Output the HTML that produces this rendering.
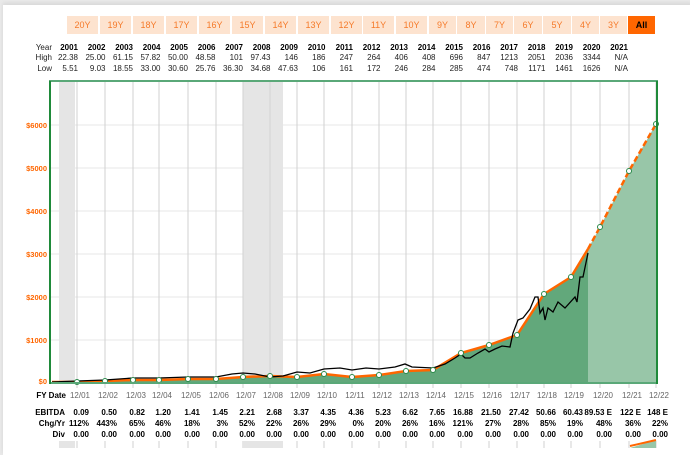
<!DOCTYPE html>
<html><head><meta charset="utf-8"><style>
body{margin:0;width:690px;height:448px;overflow:hidden;background:#e9e9e9;font-family:"Liberation Sans",Arial,sans-serif;}
#card{position:absolute;left:3px;top:5px;width:690px;height:450px;background:#fff;box-shadow:0 -2px 4px rgba(0,0,0,.08);}
.b{position:absolute;top:16px;height:18px;background:#fde3cf;color:#f57a2a;font-size:9px;line-height:18px;text-align:center;}
.t{position:absolute;font-size:8px;line-height:9px;color:#222;text-align:right;width:30px;}
.bd{font-weight:bold;color:#000;}
.c{position:absolute;font-size:8px;line-height:9px;color:#666;text-align:center;width:30px;}
</style></head><body>
<div id="card"></div>
<div class="b" style="left:67px;width:31px">20Y</div>
<div class="b" style="left:100px;width:31px">19Y</div>
<div class="b" style="left:133px;width:31px">18Y</div>
<div class="b" style="left:166px;width:31px">17Y</div>
<div class="b" style="left:199px;width:31px">16Y</div>
<div class="b" style="left:232px;width:31px">15Y</div>
<div class="b" style="left:265px;width:31px">14Y</div>
<div class="b" style="left:298px;width:31px">13Y</div>
<div class="b" style="left:331px;width:31px">12Y</div>
<div class="b" style="left:363px;width:31px">11Y</div>
<div class="b" style="left:396px;width:31px">10Y</div>
<div class="b" style="left:429px;width:27px">9Y</div>
<div class="b" style="left:457px;width:28px">8Y</div>
<div class="b" style="left:486px;width:27px">7Y</div>
<div class="b" style="left:514px;width:28px">6Y</div>
<div class="b" style="left:543px;width:28px">5Y</div>
<div class="b" style="left:572px;width:27px">4Y</div>
<div class="b" style="left:600px;width:27px">3Y</div>
<div class="b" style="left:628px;width:27px;background:#ff6600;color:#000;font-weight:bold">All</div>
<div id="tbl"></div>
<svg style="position:absolute;left:0;top:0" width="690" height="448">
<g stroke="#ececec" stroke-width="1.2">
<line x1="50" x2="657" y1="125" y2="125"/><line x1="50" x2="657" y1="168" y2="168"/><line x1="50" x2="657" y1="211" y2="211"/><line x1="50" x2="657" y1="254" y2="254"/><line x1="50" x2="657" y1="297" y2="297"/><line x1="50" x2="657" y1="340" y2="340"/>
</g>
<rect x="59" y="82" width="16" height="301" fill="#e5e5e5"/>
<rect x="243" y="82" width="40" height="301" fill="#e5e5e5"/>
<g stroke="#d2d2d2" stroke-width="1" id="vg"></g>
<polygon fill="#98c6a8" points="588,249 600,227 629,171 656,124 656,383 588,383"/>
<polygon fill="#62a87b" points="50,383 52,382 77,382 105,381 133,380 159,380 188,379 216,379 243,377 270,376 297,377 324,374 352,377 379,375 406,371 433,370 461,353 489,345 517,335 544,294 571,277 588,249 588,383"/>
<polyline fill="none" stroke="#ff6600" stroke-width="2.5" points="52,382 77,382 105,381 133,380 159,380 188,379 216,379 243,377 270,376 297,377 324,374 352,377 379,375 406,371 433,370 461,353 489,345 517,335 544,294 571,277 588,249"/>
<polyline fill="none" stroke="#ff6600" stroke-width="2.5" stroke-dasharray="6,3" points="588,249 600,227 629,171 656,124"/>
<polyline fill="none" stroke="#000" stroke-width="1.3" points="52,382 77,381 105,380 133,378 159,378 188,377 216,377 232,374 243,373 255,374 270,377 283,376 297,372 310,373 324,369 340,368 352,370 366,368 379,369 395,367 405,364 412,367 433,368 445,364 455,358 461,354 465,358 470,358 478,353 485,349 489,352 495,349 502,346 510,347 513,333 518,320 523,318 530,309 535,297 538,297 540,313 543,308 545,320 548,308 553,312 558,302 565,308 575,297 577,302 580,277 583,277 588,253"/>
<g id="em" fill="#fff" stroke="#2a8a4a" stroke-width="1"></g>
<rect x="50" y="81" width="607" height="302" fill="none" stroke="#5aa878" stroke-width="2"/>
<line x1="50" y1="81" x2="50" y2="384" stroke="#1f8a3a" stroke-width="2"/>
<line x1="657" y1="81" x2="657" y2="384" stroke="#1f8a3a" stroke-width="2"/>
<g font-family="Liberation Sans,Arial,sans-serif" font-size="7.5" font-weight="bold" fill="#ff6600" text-anchor="end">
<text x="47" y="128">$6000</text><text x="47" y="171">$5000</text><text x="47" y="214">$4000</text><text x="47" y="257">$3000</text><text x="47" y="300">$2000</text><text x="47" y="343">$1000</text><text x="47" y="384">$0</text>
</g>
<rect x="59" y="441" width="16" height="7" fill="#e5e5e5"/>
<rect x="243" y="441" width="40" height="7" fill="#e5e5e5"/>
<polygon points="630,448 656,440 656,448" fill="#98c6a8"/>
<line x1="630" y1="446" x2="656" y2="440" stroke="#ff6600" stroke-width="2"/>
</svg>
<div id="bot"></div>
<script>
var gx=[77,105,133,159,188,216,243,270,297,324,352,379,406,433,461,489,517,544,571,600,629,656];
var ey=[382,381,380,380,379,379,377,376,377,374,377,375,371,370,353,345,335,294,277,227,171,124];
var vg=document.getElementById('vg'),em=document.getElementById('em'),ns='http://www.w3.org/2000/svg';
gx.forEach(function(x,i){var l=document.createElementNS(ns,'line');l.setAttribute('x1',x);l.setAttribute('x2',x);l.setAttribute('y1',82);l.setAttribute('y2',388);vg.appendChild(l);
var l2=document.createElementNS(ns,'line');l2.setAttribute('x1',x);l2.setAttribute('x2',x);l2.setAttribute('y1',441);l2.setAttribute('y2',448);vg.appendChild(l2);
var c=document.createElementNS(ns,'circle');c.setAttribute('cx',x);c.setAttribute('cy',ey[i]);c.setAttribute('r',2.5);em.appendChild(c);});
var hi=['22.38','25.00','61.15','57.82','50.00','48.58','101','97.43','146','186','247','264','406','408','696','847','1213','2051','2036','3344','N/A'],lo=['5.51','9.03','18.55','33.00','30.60','25.76','36.30','34.68','47.63','106','161','172','246','284','285','474','748','1171','1461','1626','N/A'];
var h='<div class="t bd" style="left:22px;top:43px;font-weight:normal;color:#222">Year</div><div class="t" style="left:22px;top:53px">High</div><div class="t" style="left:22px;top:64px">Low</div>';
for(var i=0;i<21;i++){var r=78+27.5*i-30;h+='<div class="t bd" style="left:'+r+'px;top:43px">'+(2001+i)+'</div><div class="t" style="left:'+r+'px;top:53px">'+hi[i]+'</div><div class="t" style="left:'+r+'px;top:64px">'+lo[i]+'</div>';}
document.getElementById('tbl').innerHTML=h;
var eb=['0.09','0.50','0.82','1.20','1.41','1.45','2.21','2.68','3.37','4.35','4.36','5.23','6.62','7.65','16.88','21.50','27.42','50.66','60.43','89.53 E','122 E','148 E'];
var cg=['112%','443%','65%','46%','18%','3%','52%','22%','26%','29%','0%','20%','26%','16%','121%','27%','28%','85%','19%','48%','36%','22%'];
var b='<div class="t bd" style="left:16px;top:391px;width:50px">FY Date</div><div class="t bd" style="left:20px;top:408px;width:45px">EBITDA</div><div class="t bd" style="left:20px;top:419px;width:45px">Chg/Yr</div><div class="t bd" style="left:20px;top:430px;width:45px">Div</div>';
gx.forEach(function(x,i){var r=x+12-40;b+='<div class="c" style="left:'+(x-12)+'px;top:391px">12/'+String(i+1).padStart(2,'0')+'</div><div class="t bd" style="left:'+r+'px;top:408px;width:40px">'+eb[i]+'</div><div class="t bd" style="left:'+r+'px;top:419px;width:40px">'+cg[i]+'</div><div class="t bd" style="left:'+r+'px;top:430px;width:40px">0.00</div>';});
document.getElementById('bot').innerHTML=b;
</script>
</body></html>
